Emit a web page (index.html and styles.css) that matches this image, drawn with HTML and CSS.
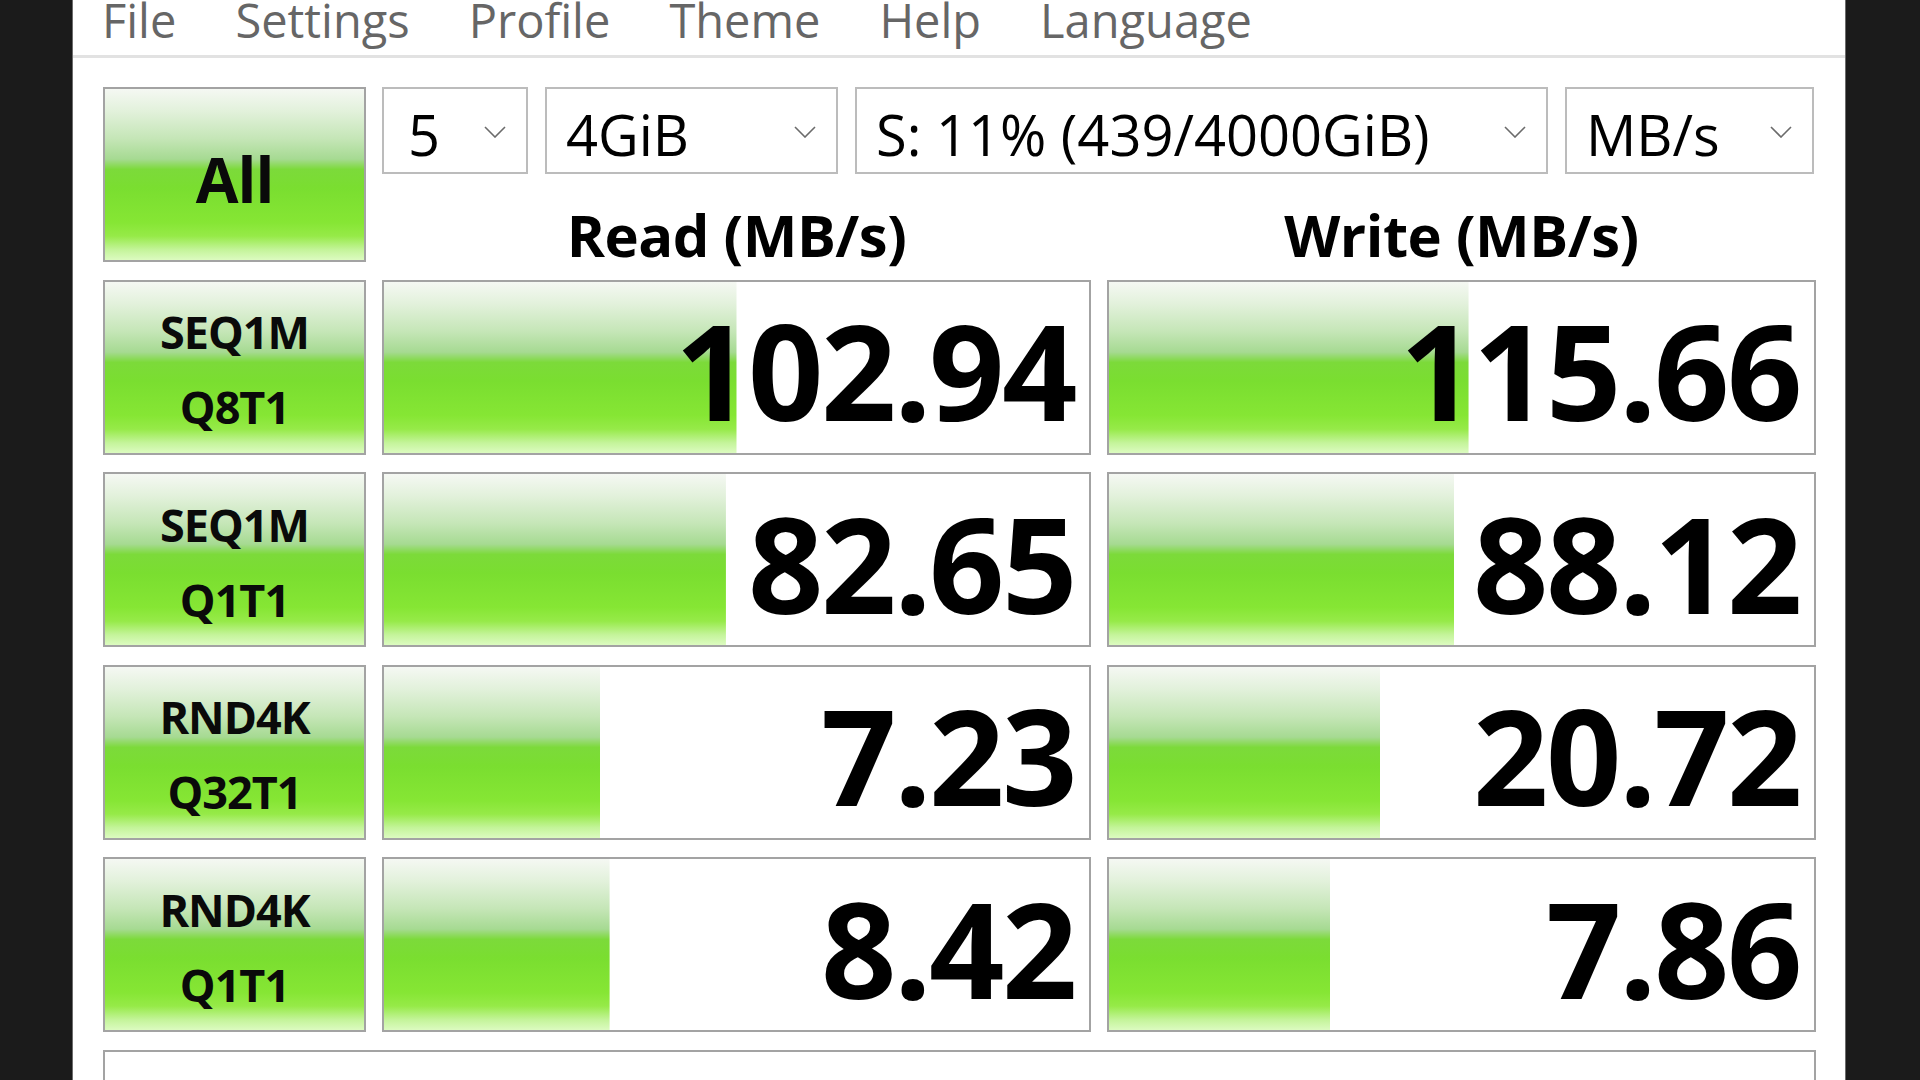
FILE: index.html
```html
<!DOCTYPE html>
<html lang="en">
<head>
<meta charset="utf-8">
<title>CrystalDiskMark</title>
<link rel="stylesheet" href="styles.css">
</head>
<body>
<div class="window">
  <nav class="menubar">
    <span class="menu-item">File</span>
    <span class="menu-item">Settings</span>
    <span class="menu-item">Profile</span>
    <span class="menu-item">Theme</span>
    <span class="menu-item">Help</span>
    <span class="menu-item">Language</span>
  </nav>
  <main class="panel">
    <div class="bench">
      <div class="btn btn-all">All</div>
      <div class="selects">
        <div class="select sel-count"><span>5</span><svg class="chev" viewBox="0 0 22 12"><polyline points="1,1 11,11 21,1"/></svg></div>
        <div class="select sel-size"><span>4GiB</span><svg class="chev" viewBox="0 0 22 12"><polyline points="1,1 11,11 21,1"/></svg></div>
        <div class="select sel-drive"><span>S: 11% (439/4000GiB)</span><svg class="chev" viewBox="0 0 22 12"><polyline points="1,1 11,11 21,1"/></svg></div>
        <div class="select sel-unit"><span>MB/s</span><svg class="chev" viewBox="0 0 22 12"><polyline points="1,1 11,11 21,1"/></svg></div>
      </div>
      <div class="col-head">Read (MB/s)</div>
      <div class="col-head">Write (MB/s)</div>

      <div class="btn btn-test"><span>SEQ1M</span><span>Q8T1</span></div>
      <div class="cell" style="--pct: 50%">102.94</div>
      <div class="cell" style="--pct: 51%">115.66</div>

      <div class="btn btn-test"><span>SEQ1M</span><span>Q1T1</span></div>
      <div class="cell" style="--pct: 48.5%">82.65</div>
      <div class="cell" style="--pct: 49%">88.12</div>

      <div class="btn btn-test"><span>RND4K</span><span>Q32T1</span></div>
      <div class="cell" style="--pct: 30.7%">7.23</div>
      <div class="cell" style="--pct: 38.5%">20.72</div>

      <div class="btn btn-test"><span>RND4K</span><span>Q1T1</span></div>
      <div class="cell" style="--pct: 32%">8.42</div>
      <div class="cell" style="--pct: 31.4%">7.86</div>

      <div class="comment"></div>
    </div>
  </main>
</div>
</body>
</html>
```
FILE: styles.css
```css
html, body {
  margin: 0;
  padding: 0;
  height: 100%;
  overflow: hidden;
}

body {
  background: #1b1b1b;
  font-family: "Open Sans", "Noto Sans", sans-serif;
}

.window {
  margin-left: 72px;
  width: 1774px;
  height: 1080px;
  box-sizing: border-box;
  background: #ffffff;
  border-left: 1px solid #6c6c6c;
  border-right: 1px solid #6c6c6c;
  overflow: hidden;
}

.menubar {
  display: flex;
  align-items: flex-start;
  gap: 59px;
  height: 55px;
  border-bottom: 3px solid #e2e2e2;
  padding-left: 29px;
}

.menu-item {
  font-size: 47px;
  line-height: 40px;
  color: #666666;
}

.panel {
  padding: 29px 28px 0 30px;
}

.bench {
  --green: linear-gradient(to bottom,
    #f5f8f3 0%,
    #e2f1db 13%,
    #c5e6b7 29%,
    #a6da92 41%,
    #7cda3a 47%,
    #7ade30 58%,
    #86e634 78%,
    #96ea48 86%,
    #c4f49a 94%,
    #dcfbc0 100%);
  display: grid;
  grid-template-columns: 263px 709px 709px;
  grid-template-rows: 87px 70.5px repeat(4, 175px) 120px;
  column-gap: 16px;
  row-gap: 17.5px;
}

.btn {
  box-sizing: border-box;
  border: 2px solid #a3a3a3;
  background: var(--green);
  color: #0a0a0a;
  font-weight: 700;
  display: flex;
  flex-direction: column;
  align-items: center;
  justify-content: center;
}

.btn-all {
  grid-row: 1 / span 2;
  grid-column: 1;
  font-size: 62px;
  padding-top: 8px;
  letter-spacing: -1px;
}

.selects {
  grid-row: 1;
  grid-column: 2 / span 2;
  display: flex;
  gap: 17px;
}

.select {
  box-sizing: border-box;
  height: 87px;
  border: 2px solid #bcbcbc;
  display: flex;
  align-items: center;
  justify-content: space-between;
  padding: 6px 20px 0 19px;
  font-size: 56px;
  color: #000;
}

.sel-count { width: 146px; padding-left: 24px; }
.sel-size { width: 293px; }
.sel-drive { width: 693px; }
.sel-unit { width: 249px; }

.chev {
  width: 22px;
  height: 12px;
  margin-top: -4px;
  flex: none;
}

.chev polyline {
  fill: none;
  stroke: #6b6b6b;
  stroke-width: 1.6;
}

.col-head {
  grid-row: 2;
  font-size: 58px;
  font-weight: 700;
  color: #000;
  text-align: center;
  line-height: 62px;
  padding-top: 12px;
  letter-spacing: -0.5px;
  white-space: nowrap;
}

.btn-test {
  font-size: 45px;
  line-height: 75px;
  padding-top: 4px;
  letter-spacing: -1px;
}

.cell {
  box-sizing: border-box;
  border: 2px solid #a3a3a3;
  background: var(--green) no-repeat;
  background-size: var(--pct) 100%;
  background-color: #ffffff;
  display: flex;
  align-items: center;
  justify-content: flex-end;
  padding: 6px 14px 0 0;
  font-size: 132px;
  font-weight: 700;
  color: #000;
  letter-spacing: -2.5px;
}

.comment {
  grid-column: 1 / span 3;
  box-sizing: border-box;
  border: 2px solid #a3a3a3;
  border-bottom: none;
}
```
